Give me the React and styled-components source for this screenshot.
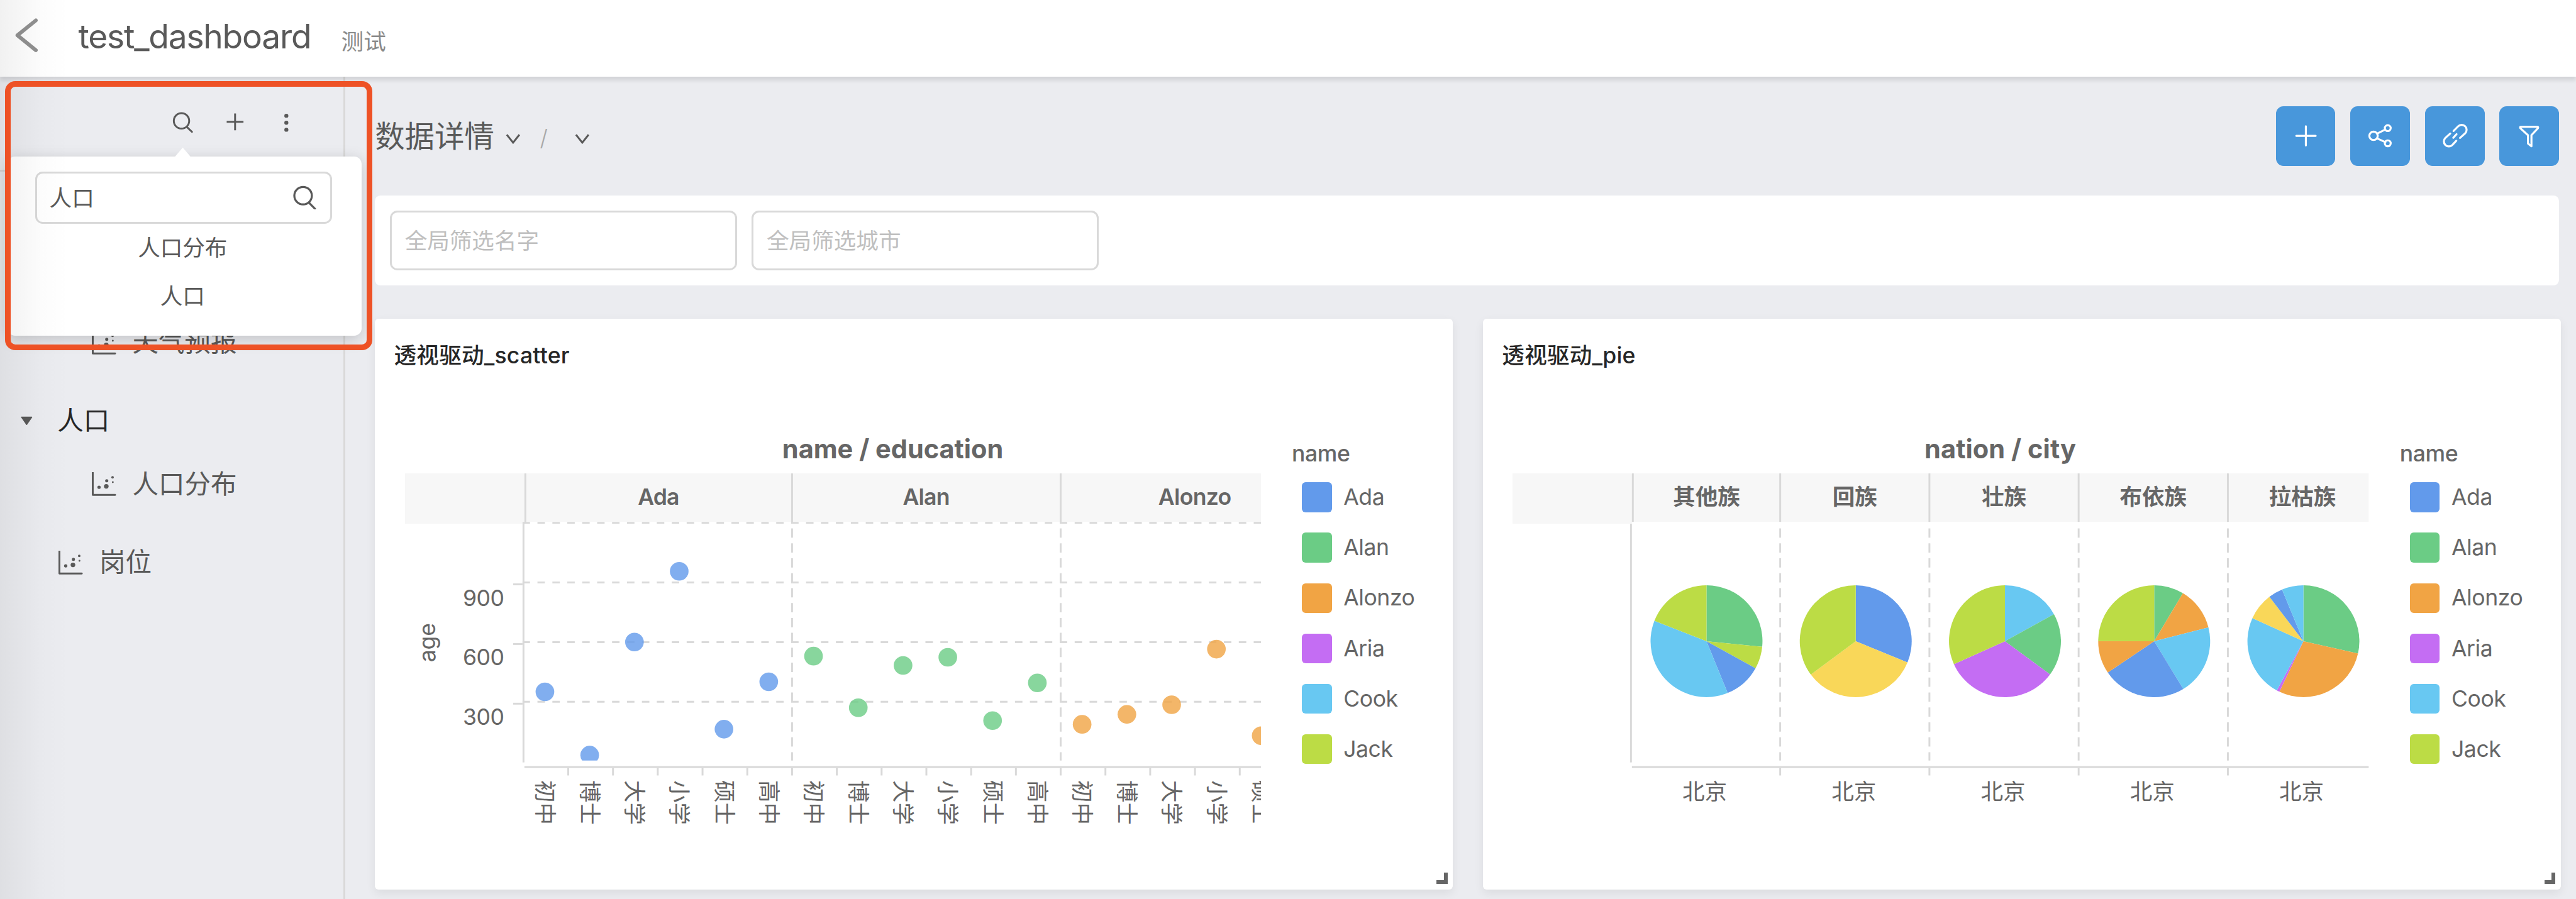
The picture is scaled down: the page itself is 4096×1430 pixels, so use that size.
import React from 'react';
import styled, { createGlobalStyle } from 'styled-components';

// Design units are the 4x artboard; px() converts them to screen pixels.
const RATIO = 4096 / 5524;
const px = (n) => `${+(n * RATIO).toFixed(3)}px`;

const FONT = `Inter, "Noto Sans CJK SC", sans-serif`;

const color = {
  page: '#ebecf0',
  line: '#d9d9d9',
  text: '#595959',
  dark: '#262626',
  chart: '#666666',
  band: '#f7f7f7',
  primary: '#4897db',
  mark: '#ee5226',
};

const hue = {
  blue: '#629aeb',
  green: '#6bcc85',
  orange: '#f1a444',
  purple: '#c46df3',
  cyan: '#68c8f2',
  lime: '#bcdc45',
  yellow: '#f9d759',
};

const GlobalStyle = createGlobalStyle`
  * { box-sizing: border-box; }
  body { margin: 0; background: ${color.page}; overflow: hidden; }
  ul { list-style: none; margin: 0; padding: 0; }
`;

const Page = styled.div`
  position: relative;
  display: flex;
  flex-direction: column;
  width: 4096px;
  height: 1430px;
  overflow: hidden;
  background: ${color.page};
  color: ${color.text};
  font-family: ${FONT};
  font-size: ${px(48)};
  line-height: 1;
`;

const Header = styled.header`
  position: relative;
  z-index: 1;
  display: flex;
  align-items: flex-start;
  flex: none;
  height: ${px(164)};
  padding-left: ${px(32)};
  background: #fff;
  box-shadow: 0 ${px(8)} ${px(8)} rgba(0, 0, 0, 0.1);
`;

const BackIcon = styled.svg`
  width: ${px(50)};
  height: ${px(76)};
  margin-top: ${px(38)};
`;

const Title = styled.h1`
  margin: 0 0 0 ${px(86)};
  font-size: ${px(72)};
  font-weight: 400;
  line-height: ${px(156)};
  letter-spacing: ${px(-1.7)};
`;

const Description = styled.span`
  margin-left: ${px(65)};
  color: #8a8a8a;
  line-height: ${px(181)};
`;

const Body = styled.div`
  display: flex;
  flex: 1;
  min-height: 0;
`;

const Sidebar = styled.aside`
  position: relative;
  flex: none;
  width: ${px(740)};
  border-right: 3px solid ${color.line};
`;

const SidebarTools = styled.div`
  display: flex;
  align-items: center;
  height: ${px(204)};
  padding: 0 0 ${px(6)} ${px(368)};
  border-bottom: 3px solid ${color.line};
`;

const ToolIcon = styled.svg`
  flex: none;
  width: ${px(48)};
  height: ${px(48)};
  margin-right: ${px(64)};
`;

const Tree = styled.ul`
  padding-top: ${px(299)};
`;

const TreeGroup = styled.li`
  margin-bottom: ${px(32)};
`;

const TreeRow = styled.div`
  display: flex;
  align-items: center;
  height: ${px(136)};
  padding-left: ${(p) => px(p.$indent)};
  color: ${(p) => (p.$parent ? color.dark : color.text)};
  font-size: ${px(56)};
`;

const Caret = styled.svg`
  width: ${px(28)};
  height: ${px(20)};
  margin-right: ${px(52)};
`;

const LeafIcon = styled.svg`
  width: ${px(52)};
  height: ${px(52)};
  margin-right: ${px(35)};
`;

const Popover = styled.div`
  position: absolute;
  z-index: 2;
  left: ${px(16)};
  top: ${px(172)};
  width: ${px(760)};
  height: ${px(384)};
  padding: ${px(32)} ${px(64)} 0 ${px(60)};
  border-radius: ${px(16)};
  background: #fff;
  box-shadow: 0 ${px(8)} ${px(32)} rgba(0, 0, 0, 0.18);
`;

const PopoverArrow = styled.svg`
  position: absolute;
  left: ${px(359)};
  top: ${px(-20)};
  width: ${px(34)};
  height: ${px(21)};
`;

const SearchBox = styled.div`
  display: flex;
  align-items: center;
  justify-content: space-between;
  height: ${px(112)};
  padding: ${px(3)} ${px(29)} 0 ${px(26)};
  border: 3px solid ${color.line};
  border-radius: ${px(16)};
`;

const SearchBoxIcon = styled.svg`
  width: ${px(50)};
  height: ${px(52)};
  margin-bottom: ${px(4)};
`;

const Results = styled.ul`
  margin-right: ${px(5)};
  text-align: center;
`;

const Result = styled.li`
  line-height: ${px(104)};
`;

const Marker = styled.div`
  position: absolute;
  z-index: 4;
  left: ${px(11)};
  top: ${px(173.5)};
  width: ${px(787.5)};
  height: ${px(578)};
  border: 9px solid ${color.mark};
  border-radius: ${px(22)};
`;

const EdgeShade = styled.div`
  position: absolute;
  z-index: 3;
  inset: 0 auto 0 0;
  width: ${px(150)};
  background: linear-gradient(to right, rgba(0, 0, 0, 0.055), rgba(0, 0, 0, 0.012) 60%, transparent);
  pointer-events: none;
`;

const Main = styled.main`
  flex: 1;
  min-width: 0;
  padding-left: ${px(64)};
`;

const Toolbar = styled.div`
  display: flex;
  align-items: center;
  height: ${px(256)};
  padding-right: ${px(36)};
`;

const Crumb = styled.span`
  font-size: ${px(64)};
`;

const Slash = styled.span`
  width: ${px(18)};
  margin: ${px(10)} ${px(57)} 0 ${px(42)};
  color: #a8a8a8;
  font-weight: 300;
`;

const Chevron = styled.svg`
  width: ${px(32)};
  height: ${px(24)};
  margin: ${px(13)} 0 0 ${(p) => px(p.$gap)};
`;

const Actions = styled.div`
  display: flex;
  gap: ${px(32)};
  margin-left: auto;
`;

const ActionButton = styled.button`
  width: ${px(128)};
  height: ${px(128)};
  padding: 0;
  border: 0;
  border-radius: ${px(16)};
  background: ${color.primary};

  svg {
    display: block;
    width: 100%;
    height: 100%;
  }
`;

const FilterPanel = styled.section`
  display: flex;
  gap: ${px(32)};
  height: ${px(192)};
  margin-right: ${px(36)};
  padding: ${px(32)};
  border-radius: ${px(12)};
  background: #fff;
`;

const FilterField = styled.div`
  display: flex;
  align-items: center;
  width: ${px(744)};
  padding: ${px(4)} 0 0 ${px(28)};
  border: 3px solid ${color.line};
  border-radius: ${px(16)};
  color: #bfbfbf;
`;

const Cards = styled.section`
  display: flex;
  gap: ${px(64)};
  margin-top: ${px(72)};
`;

const Card = styled.article`
  position: relative;
  flex: none;
  width: ${px(2312)};
  height: ${px(1224)};
  border-radius: ${px(8)};
  background: #fff;
  box-shadow: 0 ${px(8)} ${px(20)} rgba(0, 0, 0, 0.07);
`;

const CardTitle = styled.h2`
  margin: 0;
  padding-left: ${px(41)};
  color: ${color.dark};
  font-size: ${px(48)};
  font-weight: 500;
  line-height: ${px(158)};
  letter-spacing: ${px(0.3)};
`;

const ResizeHandle = styled.span`
  position: absolute;
  right: ${px(12)};
  bottom: ${px(12)};
  width: ${px(24)};
  height: ${px(24)};
  border: solid ${color.chart};
  border-width: 0 6px 6px 0;
`;

const ChartRow = styled.div`
  display: flex;
  padding-left: ${px(64)};
`;

const Plot = styled.svg`
  flex: none;
  width: ${px(1836)};
  height: ${px(1066)};
  overflow: hidden;
  font-family: ${FONT};
  font-size: 48px;
  fill: ${color.chart};
`;

const Legend = styled.div`
  padding: ${px(107)} 0 0 ${px(64)};
  color: ${color.chart};
`;

const LegendTitle = styled.div`
  margin: 0 0 ${px(16)} ${px(2)};
  font-weight: 500;
  line-height: ${px(48)};
  letter-spacing: ${px(-0.5)};
`;

const LegendItem = styled.li`
  display: flex;
  align-items: center;
  gap: ${px(25)};
  height: ${px(108)};
  padding-left: ${px(24)};
  letter-spacing: ${px(-0.6)};
`;

const Swatch = styled.i`
  width: ${px(64)};
  height: ${px(64)};
  border-radius: ${px(8)};
  background: ${(p) => p.$color};
`;

const SearchGlyph = () => (
  <g fill="none" stroke={color.text} strokeWidth="4" strokeLinecap="round">
    <circle cx="21" cy="22" r="16.5" />
    <path d="M32 34.500L43.500 45.500" />
  </g>
);

const ScatterIcon = () => (
  <LeafIcon viewBox="0 0 52 52" fill={color.text}>
    <path d="M2 1V49H50" fill="none" stroke={color.text} strokeWidth="4" strokeLinecap="round" strokeLinejoin="round" />
    <circle cx="15.500" cy="32.500" r="3.600" />
    <circle cx="31" cy="30.500" r="5" />
    <circle cx="32" cy="18.500" r="3.400" />
    <circle cx="44.500" cy="11" r="2.700" />
    <circle cx="45" cy="21.500" r="2" />
  </LeafIcon>
);

const Down = ({ gap }) => (
  <Chevron $gap={gap} viewBox="0 0 32 24">
    <path d="M2.500 3L16 20L29.500 3" fill="none" stroke={color.text} strokeWidth="4" />
  </Chevron>
);

const ACTIONS = [
  { name: 'add', art: <path d="M64 43V84M43.500 63.500H85" /> },
  {
    name: 'share',
    art: (
      <>
        <circle cx="50" cy="63.500" r="9" />
        <circle cx="80.500" cy="47" r="6.300" />
        <circle cx="80.500" cy="79.500" r="6.300" />
        <path d="M58 58.500L75 50M57.500 69L75.500 77" />
      </>
    ),
  },
  {
    name: 'link',
    art: (
      <path d="M61 53L71 43A10 10 0 0 1 86 58L75 68M67 74L58.500 83A10 10 0 0 1 43.500 68L54 58.500M60.500 67.500L67.500 60" />
    ),
  },
  {
    name: 'filter',
    art: <path d="M46 44H82Q84 44 83 47L69 62V86L61.500 80V62L45 47Q44 44 46 44Z" />,
  },
];

const LEGEND = [
  ['Ada', hue.blue],
  ['Alan', hue.green],
  ['Alonzo', hue.orange],
  ['Aria', hue.purple],
  ['Cook', hue.cyan],
  ['Jack', hue.lime],
];

const POINTS = [
  [hue.blue, [[1168, 1484.600], [1264, 1620.400], [1360, 1377.700], [1456, 1226], [1552, 1564.700], [1648, 1463]]],
  [hue.green, [[1744, 1408], [1840, 1518.700], [1936, 1428], [2032, 1410.500], [2128, 1546.300], [2224, 1465.400]]],
  [hue.orange, [[2320, 1554.300], [2416, 1533], [2512, 1512.300], [2608, 1393], [2704, 1578.700]]],
];

const EDUCATION = ['初中', '博士', '大学', '小学', '硕士', '高中'];

const PIES = [
  {
    nation: '其他族',
    labelX: 3660,
    parts: [[hue.green, 95.7], [hue.lime, 118.9], [hue.blue, 157.8], [hue.cyan, 291.4], [hue.lime, 360]],
  },
  { nation: '回族', labelX: 3978, parts: [[hue.blue, 112.3], [hue.yellow, 233.4], [hue.lime, 360]] },
  {
    nation: '壮族',
    labelX: 4298,
    parts: [[hue.cyan, 61.1], [hue.green, 126.3], [hue.purple, 245.8], [hue.lime, 360]],
  },
  {
    nation: '布依族',
    labelX: 4618,
    parts: [[hue.green, 30.9], [hue.orange, 75.8], [hue.cyan, 148.7], [hue.blue, 236], [hue.orange, 270.2], [hue.lime, 360]],
  },
  {
    nation: '拉枯族',
    labelX: 4938,
    parts: [
      [hue.green, 102.7],
      [hue.orange, 205.4],
      [hue.purple, 208.4],
      [hue.cyan, 294.3],
      [hue.yellow, 322.6],
      [hue.blue, 337.6],
      [hue.cyan, 360],
    ],
  },
];

const rim = (cx, cy, r, deg) => {
  const a = (deg * Math.PI) / 180;
  return `${(cx + r * Math.sin(a)).toFixed(2)} ${(cy - r * Math.cos(a)).toFixed(2)}`;
};

const slice = (cx, cy, r, from, to) =>
  `M${cx} ${cy}L${rim(cx, cy, r, from)}A${r} ${r} 0 ${to - from > 180 ? 1 : 0} 1 ${rim(cx, cy, r, to)}Z`;

const Pie = ({ cx, cy, r, parts }) => (
  <g>
    {parts.map(([fill, to], i) => (
      <path key={i} fill={fill} d={slice(cx, cy, r, i ? parts[i - 1][1] : 0, to)} />
    ))}
  </g>
);

const Box = ({ x1, x2, y1, y2, fill = color.line }) => (
  <rect x={x1} y={y1} width={x2 - x1} height={y2 - y1} fill={fill} />
);

const ColumnSplit = ({ x, bottom = 1120 }) => (
  <>
    <Box x1={x} x2={x + 4} y1={1016} y2={bottom} />
    <path d={`M${x + 2} 1134V1632`} stroke={color.line} strokeWidth="4" strokeDasharray="20 12" />
  </>
);

const ScatterChart = () => (
  <Plot viewBox="868 842 1836 1066">
    <text x="1914" y="984" textAnchor="middle" fontSize="56" fontWeight="700" textLength="474">
      name / education
    </text>
    <Box x1={868} x2={1124} y1={1016} y2={1124} fill={color.band} />
    <Box x1={1124} x2={2704} y1={1016} y2={1120} fill={color.band} />
    <Box x1={1124} x2={1128} y1={1016} y2={1124} />
    <ColumnSplit x={1696} bottom={1124} />
    <ColumnSplit x={2272} bottom={1124} />
    {[['Ada', 1412, 89], ['Alan', 1986, 101], ['Alonzo', 2562, 157]].map(([name, x, w]) => (
      <text key={name} x={x} y="1084" textAnchor="middle" fontWeight="600" textLength={w}>
        {name}
      </text>
    ))}
    {[1122, 1250, 1378, 1506].map((y) => (
      <path key={y} d={`M1120 ${y}H2704`} stroke={color.line} strokeWidth="4" strokeDasharray="16 16" />
    ))}
    {[[900, 1252], [600, 1380], [300, 1508]].map(([value, y]) => (
      <g key={value}>
        <Box x1={1100} x2={1120} y1={y} y2={y + 4} />
        <text x="1081" y={y + 48} textAnchor="end" textLength="89">
          {value}
        </text>
      </g>
    ))}
    <Box x1={1120} x2={1124} y1={1124} y2={1636} />
    <Box x1={1124} x2={2704} y1={1644} y2={1648} />
    <text transform="translate(933 1379) rotate(-90)" textAnchor="middle" textLength="84">
      age
    </text>
    <clipPath id="plotArea">
      <rect x="1124" y="1124" width="1580" height="508" />
    </clipPath>
    <g clipPath="url(#plotArea)" opacity="0.8">
      {POINTS.map(([fill, dots]) => dots.map(([x, y]) => <circle key={x} cx={x} cy={y} r="20" fill={fill} />))}
    </g>
    {Array.from({ length: 17 }, (_, i) => (
      <g key={i}>
        {i > 0 && <Box x1={1120 + i * 96} x2={1124 + i * 96} y1={1648} y2={1664} />}
        <text transform={`translate(${1151 + i * 96} 1674) rotate(90)`}>{EDUCATION[i % 6]}</text>
      </g>
    ))}
  </Plot>
);

const PieChart = () => (
  <Plot viewBox="3244 842 1836 1066">
    <text x="4290" y="984" textAnchor="middle" fontSize="56" fontWeight="700" textLength="325">
      nation / city
    </text>
    <Box x1={3244} x2={3500} y1={1016} y2={1124} fill={color.band} />
    <Box x1={3500} x2={5080} y1={1016} y2={1120} fill={color.band} />
    <Box x1={3500} x2={3504} y1={1016} y2={1120} />
    <Box x1={3496} x2={3500} y1={1124} y2={1636} />
    <Box x1={3500} x2={5080} y1={1644} y2={1648} />
    {PIES.map(({ nation, labelX, parts }, i) => (
      <g key={nation}>
        {i > 0 && <ColumnSplit x={3496 + i * 320} />}
        {i > 0 && <Box x1={3496 + i * 320} x2={3500 + i * 320} y1={1648} y2={1664} />}
        <text x={labelX} y="1084" textAnchor="middle" fontWeight="700">
          {nation}
        </text>
        <Pie cx={3660 + i * 320} cy={1376} r={120} parts={parts} />
        <text x={3656 + i * 320} y="1716" textAnchor="middle">
          北京
        </text>
      </g>
    ))}
  </Plot>
);

const ChartCard = ({ title, children }) => (
  <Card>
    <CardTitle>{title}</CardTitle>
    <ChartRow>
      {children}
      <Legend>
        <LegendTitle>name</LegendTitle>
        <ul>
          {LEGEND.map(([name, fill]) => (
            <LegendItem key={name}>
              <Swatch $color={fill} />
              {name}
            </LegendItem>
          ))}
        </ul>
      </Legend>
    </ChartRow>
    <ResizeHandle />
  </Card>
);

const Leaf = ({ indent, children }) => (
  <TreeRow $indent={indent}>
    <ScatterIcon />
    {children}
  </TreeRow>
);

export default function App() {
  return (
    <Page>
      <GlobalStyle />
      <Header>
        <BackIcon viewBox="0 0 50 76">
          <path d="M44.500 6L5 38L44.500 70" fill="none" stroke="#919191" strokeWidth="8" strokeLinecap="round" strokeLinejoin="round" />
        </BackIcon>
        <Title>test_dashboard</Title>
        <Description>测试</Description>
      </Header>
      <Body>
        <Sidebar>
          <SidebarTools>
            <ToolIcon viewBox="0 0 48 48">
              <SearchGlyph />
            </ToolIcon>
            <ToolIcon viewBox="0 0 48 48">
              <path d="M24 6V42M6 24H42" fill="none" stroke={color.text} strokeWidth="4" />
            </ToolIcon>
            <ToolIcon viewBox="0 0 48 48" fill={color.text}>
              <circle cx="22" cy="11" r="4.300" />
              <circle cx="22" cy="26" r="4.300" />
              <circle cx="22" cy="41" r="4.300" />
            </ToolIcon>
          </SidebarTools>
          <Tree>
            <TreeGroup>
              <Leaf indent={197}>天气预报</Leaf>
            </TreeGroup>
            <TreeGroup>
              <TreeRow $indent={43} $parent>
                <Caret viewBox="0 0 28 20">
                  <path d="M3 2H25L14 18Z" fill={color.text} stroke={color.text} strokeWidth="2" strokeLinejoin="round" />
                </Caret>
                人口
              </TreeRow>
              <Leaf indent={197}>人口分布</Leaf>
            </TreeGroup>
            <TreeGroup>
              <Leaf indent={126}>岗位</Leaf>
            </TreeGroup>
          </Tree>
          <Popover>
            <PopoverArrow viewBox="0 0 34 21">
              <path d="M0 21L17 1L34 21Z" fill="#fff" />
            </PopoverArrow>
            <SearchBox>
              人口
              <SearchBoxIcon viewBox="0 0 50 52">
                <g fill="none" stroke={color.text} strokeWidth="4.400" strokeLinecap="round">
                  <circle cx="21.500" cy="22" r="18.800" />
                  <path d="M34 37L47 50" />
                </g>
              </SearchBoxIcon>
            </SearchBox>
            <Results>
              <Result>人口分布</Result>
              <Result>人口</Result>
            </Results>
          </Popover>
        </Sidebar>
        <Main>
          <Toolbar>
            <Crumb>数据详情</Crumb>
            <Down gap={24} />
            <Slash>/</Slash>
            <Down gap={0} />
            <Actions>
              {ACTIONS.map(({ name, art }) => (
                <ActionButton key={name} aria-label={name}>
                  <svg viewBox="0 0 128 128" fill="none" stroke="#fff" strokeWidth="4.300" strokeLinecap="round" strokeLinejoin="round">
                    {art}
                  </svg>
                </ActionButton>
              ))}
            </Actions>
          </Toolbar>
          <FilterPanel>
            <FilterField>全局筛选名字</FilterField>
            <FilterField>全局筛选城市</FilterField>
          </FilterPanel>
          <Cards>
            <ChartCard title="透视驱动_scatter">
              <ScatterChart />
            </ChartCard>
            <ChartCard title="透视驱动_pie">
              <PieChart />
            </ChartCard>
          </Cards>
        </Main>
      </Body>
      <EdgeShade />
      <Marker />
    </Page>
  );
}
